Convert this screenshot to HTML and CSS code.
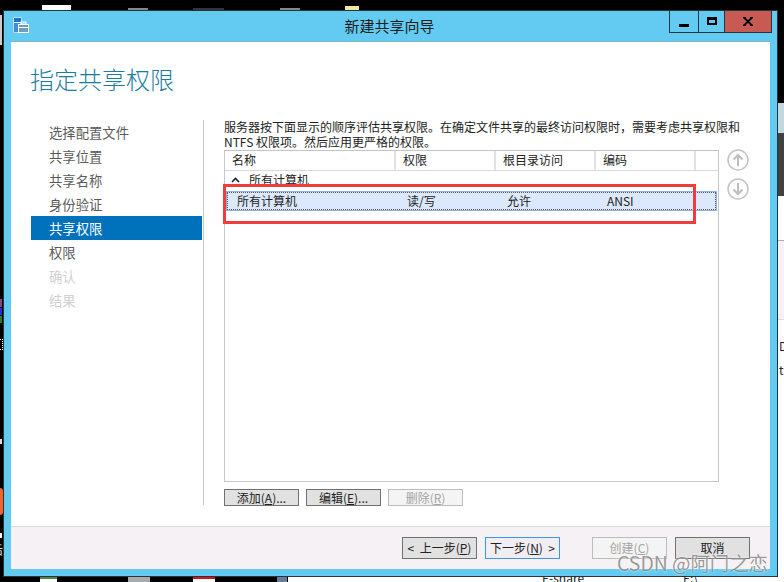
FILE: index.html
```html
<!DOCTYPE html>
<html lang="zh-CN">
<head>
    <meta charset="UTF-8">
    <title>新建共享向导</title>
    <link rel="stylesheet" href="styles.css">
</head>
<body>
    <!-- what shows of the desktop round the window -->
    <div class="bit top-doc"></div>
    <div class="bit top-grey1"></div>
    <div class="bit top-dark"></div>
    <div class="bit top-grey2"></div>
    <div class="bit top-yellow"></div>
    <div class="bit left-tab"></div>
    <div class="bit left-purple"></div>
    <div class="bit left-blue"></div>
    <div class="bit left-green"></div>
    <div class="bit left-dots"></div>
    <div class="bit left-tick"></div>
    <div class="bit left-orange"></div>
    <div class="bit left-tick2"></div>
    <div class="bit left-char">后</div>
    <div class="bit bottom-green"></div>
    <div class="bit bottom-grey"></div>
    <div class="bit bottom-red"></div>
    <div class="bit bottom-icon"></div>
    <div class="bit explorer">
        <span class="explorer-name">E-share</span>
        <span class="explorer-path">E:\</span>
    </div>
    <div class="bit side-light"></div>
    <div class="bit side-dark"></div>
    <div class="bit side-white"></div>
    <div class="bit side-pale"></div>
    <div class="bit side-bottom">
        <span class="side-d">D</span>
        <span class="side-t">t</span>
    </div>

    <div class="window">
        <header class="titlebar">
            <svg class="app-icon" width="16" height="16" viewBox="0 0 16 16">
                <rect x="0.5" y="0.5" width="8" height="15" fill="#fff"/>
                <rect x="1" y="1" width="7" height="4" fill="#1f73c9"/>
                <rect x="1" y="6" width="7" height="9" fill="#3f8fdc"/>
                <rect x="5" y="7" width="11" height="9" fill="#fff"/>
                <rect x="6" y="8" width="9" height="7" fill="#6f9dbd"/>
                <rect x="8" y="5" width="5" height="2" fill="none" stroke="#fff"/>
                <rect x="6" y="10" width="9" height="1" fill="#fff"/>
            </svg>
            <div class="title">新建共享向导</div>
            <div class="controls">
                <div class="ctl ctl-min"><span class="min-bar"></span></div>
                <div class="ctl ctl-max"><span class="max-box"></span></div>
                <div class="ctl ctl-close">
                    <svg width="10" height="9" viewBox="0 0 10 9">
                        <path d="M1 0.5 L9 8.5 M9 0.5 L1 8.5 M0 0.5 H3 M7 0.5 H10 M0 8.5 H3 M7 8.5 H10" stroke="#000" stroke-width="1.8" fill="none"/>
                    </svg>
                </div>
            </div>
        </header>

        <div class="content">
            <h1 class="heading">指定共享权限</h1>
            <div class="wizard">
                <nav class="steps">
                    <div class="step">选择配置文件</div>
                    <div class="step">共享位置</div>
                    <div class="step">共享名称</div>
                    <div class="step">身份验证</div>
                    <div class="step active">共享权限</div>
                    <div class="step">权限</div>
                    <div class="step off">确认</div>
                    <div class="step off">结果</div>
                </nav>
                <main class="panel">
                    <p class="desc">服务器按下面显示的顺序评估共享权限。在确定文件共享的最终访问权限时，需要考虑共享权限和<br>NTFS 权限项。然后应用更严格的权限。</p>
                    <div class="table-row">
                        <div class="table">
                            <div class="thead">
                                <div class="th">名称</div>
                                <div class="th">权限</div>
                                <div class="th">根目录访问</div>
                                <div class="th">编码</div>
                                <div class="th"></div>
                            </div>
                            <div class="group">
                                <svg width="9" height="6" viewBox="0 0 9 6"><path d="M1 5 L4.5 1.5 L8 5" stroke="#222" stroke-width="1.6" fill="none"/></svg>
                                <span>所有计算机</span>
                            </div>
                            <div class="selected">
                                <div class="selected-inner">
                                    <span>所有计算机</span>
                                    <span>读/写</span>
                                    <span>允许</span>
                                    <span>ANSI</span>
                                </div>
                            </div>
                            <div class="red-box"></div>
                        </div>
                        <div class="arrows">
                            <svg width="22" height="22" viewBox="0 0 22 22">
                                <circle cx="11" cy="11" r="10" fill="#fff" stroke="#c4c4c4" stroke-width="1.5"/>
                                <path d="M11 17 V6 M6.5 10.5 L11 6 L15.5 10.5" stroke="#bdbdbd" stroke-width="2" fill="none"/>
                            </svg>
                            <svg width="22" height="22" viewBox="0 0 22 22">
                                <circle cx="11" cy="11" r="10" fill="#fff" stroke="#c4c4c4" stroke-width="1.5"/>
                                <path d="M11 5 V16 M6.5 11.5 L11 16 L15.5 11.5" stroke="#bdbdbd" stroke-width="2" fill="none"/>
                            </svg>
                        </div>
                    </div>
                    <div class="table-btns">
                        <button class="btn small">添加(<u>A</u>)...</button>
                        <button class="btn small">编辑(<u>E</u>)...</button>
                        <button class="btn small disabled">删除(<u>R</u>)</button>
                    </div>
                </main>
            </div>
        </div>

        <footer class="footer">
            <button class="btn">&lt;&nbsp; 上一步(<u>P</u>)</button>
            <button class="btn primary">下一步(<u>N</u>) &nbsp;&gt;</button>
            <button class="btn disabled create">创建(<u>C</u>)</button>
            <button class="btn">取消</button>
        </footer>
    </div>

    <div class="watermark">CSDN @阿门之恋</div>
</body>
</html>
```

FILE: styles.css
```css
html, body{
    margin: 0;
    padding: 0;
    height: 100%;
}
body{
    position: relative;
    overflow: hidden;
    background-color: #000;
    font-family: "Noto Sans CJK SC", "Liberation Sans", sans-serif;
    font-size: 12px;
    color: #222;
}

/* desktop leftovers */
.bit{
    position: absolute;
}
.top-doc{ left: 42px; top: 5px; width: 29px; height: 5px; background-color: #fff; }
.top-grey1{ left: 128px; top: 8px; width: 20px; height: 2px; background-color: #888; }
.top-dark{ left: 193px; top: 8px; width: 31px; height: 2px; background-color: #3a3038; }
.top-grey2{ left: 280px; top: 8px; width: 20px; height: 2px; background-color: #888; }
.top-yellow{ left: 345px; top: 6px; width: 14px; height: 4px; background-color: #f4e6a0; }
.left-tab{ left: 0; top: 15px; width: 2px; height: 30px; background-color: #ccc; }
.left-purple{ left: 0; top: 299px; width: 2px; height: 8px; background-color: #8a3f8a; }
.left-blue{ left: 0; top: 308px; width: 2px; height: 7px; background-color: #2030d0; }
.left-green{ left: 0; top: 316px; width: 2px; height: 7px; background-color: #208020; }
.left-dots{ left: 0; top: 339px; width: 3px; height: 11px; border-top: 1px dotted #fff; border-bottom: 1px dotted #fff; border-right: 1px dotted #fff; box-sizing: border-box; }
.left-tick{ left: 0; top: 439px; width: 2px; height: 5px; background-color: #ddd; }
.left-orange{ left: 0; top: 488px; width: 3px; height: 27px; background-color: #f0642a; border-radius: 0 14px 14px 0; }
.left-tick2{ left: 0; top: 533px; width: 2px; height: 5px; background-color: #fff; }
.left-char{
    left: -9px;
    top: 542px;
    font-size: 12px;
    line-height: 16px;
    color: #ddd;
}
.bottom-green{ left: 40px; top: 577px; width: 17px; height: 5px; background-color: #fff; border-top: 2px solid #4a8a3a; box-sizing: border-box; }
.bottom-grey{ left: 128px; top: 577px; width: 22px; height: 5px; background-color: #aaa; }
.bottom-red{ left: 193px; top: 577px; width: 22px; height: 5px; background-color: #fff; border-top: 2px solid #e01010; box-sizing: border-box; }
.bottom-icon{ left: 277px; top: 577px; width: 10px; height: 5px; background-color: #6a7a9a; }
.explorer{
    left: 288px;
    top: 577px;
    right: 0;
    height: 5px;
    background-color: #fff;
    overflow: hidden;
    font-size: 12px;
    line-height: 12px;
    color: #222;
}
.explorer-name{
    position: absolute;
    left: 254px;
    top: -5px;
}
.explorer-path{
    position: absolute;
    left: 395px;
    top: -5px;
}
.side-light{ left: 778px; top: 103px; right: 0; height: 30px; background-color: #c2d8de; }
.side-dark{ left: 778px; top: 133px; right: 0; height: 63px; background-color: #404040; }
.side-white{ left: 778px; top: 196px; right: 0; height: 44px; background-color: #fff; }
.side-pale{ left: 778px; top: 240px; right: 0; height: 79px; background-color: #f5f1f5; border-top: 1px solid #aaa; box-sizing: border-box; }
.side-bottom{
    left: 778px;
    top: 319px;
    right: 0;
    bottom: 0;
    background-color: #fff;
    border-top: 1px solid #ddd;
    overflow: hidden;
    font-size: 12px;
    line-height: 14px;
}
.side-d{
    position: absolute;
    left: 1px;
    top: 19px;
}
.side-t{
    position: absolute;
    left: 1px;
    top: 43px;
}

/* window */
.window{
    position: absolute;
    left: 3px;
    top: 10px;
    width: 775px;
    height: 567px;
    box-sizing: border-box;
    border: 1px solid #26343c;
    background-color: #63cbf2;
    padding: 0 7px 7px;
    display: flex;
    flex-direction: column;
}
.titlebar{
    height: 30px;
    flex: none;
    margin: 0 -7px;
    padding-left: 9px;
    padding-right: 5px;
    display: grid;
    grid-template-columns: 1fr auto 1fr;
}
.app-icon{
    margin-top: 6px;
}
.title{
    margin-right: 6px;
    font-size: 15px;
    line-height: 29px;
    color: #1c1c1c;
}
.controls{
    display: flex;
    justify-self: end;
    height: 21px;
    border-bottom: 1px solid #26343c;
    border-left: 1px solid #26343c;
    border-right: 1px solid #26343c;
}
.ctl{
    display: flex;
    justify-content: center;
    align-items: center;
}
.ctl-min{
    width: 28px;
    border-right: 1px solid #26343c;
}
.ctl-max{
    width: 25px;
    border-right: 1px solid #26343c;
}
.ctl-close{
    width: 46px;
    background-color: #c75b53;
}
.min-bar{
    width: 10px;
    height: 3px;
    margin-top: 7px;
    background-color: #000;
}
.max-box{
    width: 10px;
    height: 8px;
    box-sizing: border-box;
    border: 2px solid #000;
    border-top-width: 3px;
    margin-bottom: 1px;
}

.content{
    flex: 1;
    background-color: #fff;
    border-top: 1px solid #7db4d4;
    box-sizing: border-box;
    display: flex;
    flex-direction: column;
}
.heading{
    margin: 0;
    padding: 21px 0 0 19px;
    height: 57px;
    flex: none;
    font-size: 24px;
    font-weight: 300;
    line-height: 32px;
    color: #1a7c9f;
}
.wizard{
    display: flex;
    height: 385px;
}
.steps{
    width: 172px;
    margin-left: 20px;
    border-right: 1px solid #c8c8c8;
    flex: none;
}
.step{
    width: 171px;
    height: 24px;
    padding-left: 18px;
    box-sizing: border-box;
    font-size: 13.33px;
    line-height: 26px;
    color: #5a5a5a;
}
.step.active{
    background-color: #0072bc;
    color: #fff;
}
.step.off{
    color: #d0d0d0;
}

.panel{
    margin-left: 20px;
    margin-top: -1px;
    width: 526px;
}
.desc{
    margin: 0;
    height: 31px;
    line-height: 15px;
    white-space: nowrap;
    color: #222;
}
.table-row{
    display: flex;
    gap: 8px;
}
.table{
    position: relative;
    width: 495px;
    height: 332px;
    box-sizing: border-box;
    border: 1px solid #c8c8c8;
    border-top-color: #c4c4cc;
}
.thead{
    display: grid;
    grid-template-columns: 171px 100px 100px 100px 1fr;
    height: 19px;
    border-bottom: 1px solid #d8d8de;
}
.th{
    padding-left: 7px;
    line-height: 18px;
    border-right: 2px solid #e0e0e6;
}
.th:last-child{
    border-right: 0;
}
.group{
    display: flex;
    align-items: center;
    gap: 9px;
    height: 19px;
    box-sizing: border-box;
    padding-left: 6px;
    padding-bottom: 2px;
    line-height: 17px;
}
.selected{
    margin: 1px 1px 0;
    height: 20px;
    box-sizing: border-box;
    border: 1px solid #8cb6e2;
    background-color: #dce8fb;
}
.selected-inner{
    display: grid;
    grid-template-columns: 170px 100px 100px 1fr;
    height: 18px;
    box-sizing: border-box;
    border: 1px dotted #555;
    padding-left: 9px;
    line-height: 16px;
}
.red-box{
    position: absolute;
    left: -2px;
    top: 33px;
    width: 473px;
    height: 40px;
    box-sizing: border-box;
    border: 3px solid #f03c3c;
}
.arrows{
    display: flex;
    flex-direction: column;
    gap: 7px;
    margin-top: -1px;
}
.arrows svg{
    display: block;
}
.table-btns{
    display: flex;
    gap: 7px;
    margin-top: 7px;
}

/* buttons */
.btn{
    width: 75px;
    height: 22px;
    padding: 0;
    box-sizing: border-box;
    border: 1px solid #707070;
    background-color: #e1e1e1;
    font-family: inherit;
    font-size: 12px;
    line-height: 16px;
    color: #222;
}
.btn.small{
    height: 17px;
    line-height: 14px;
}
.btn.primary{
    border-color: #3d96e8;
    background-color: #f1eef3;
}
.btn.disabled{
    border-color: #bcbcbc;
    background-color: #f4f4f4;
    color: #a4a4a4;
}

.footer{
    flex: none;
    height: 43px;
    box-sizing: border-box;
    border-top: 1px solid #dcd8dc;
    background-color: #f5f1f5;
    padding: 10px 0 0 391px;
    display: flex;
    gap: 8px;
}
.btn.create{
    margin-left: 24px;
}

.watermark{
    position: absolute;
    left: 617px;
    top: 551px;
    font-size: 19.4px;
    line-height: 24px;
    white-space: nowrap;
    color: rgba(120, 120, 120, 0.75);
    text-shadow: 0 0 2px #fff;
}
```
